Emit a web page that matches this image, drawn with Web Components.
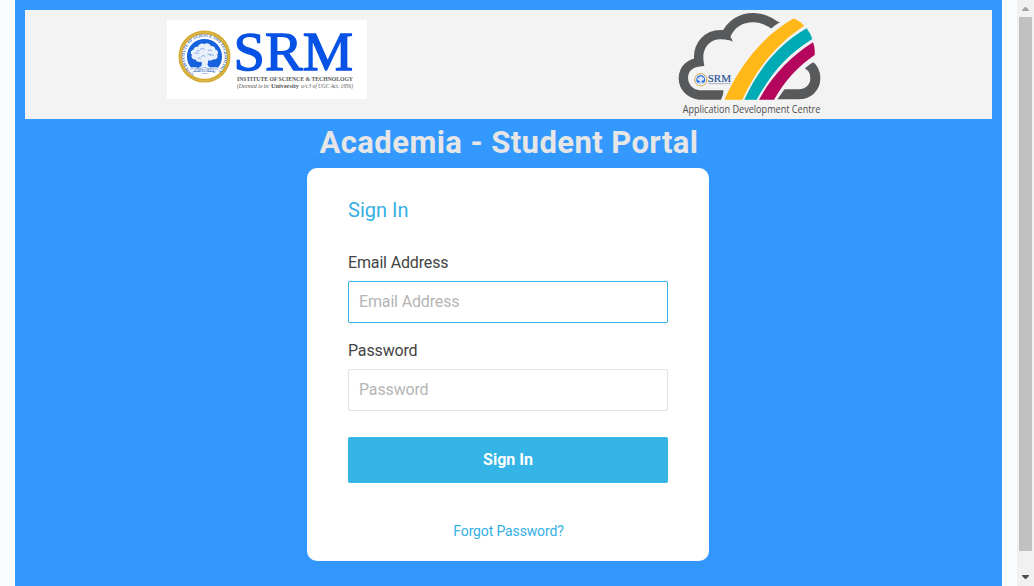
<!DOCTYPE html>
<html lang="en"><head><meta charset="utf-8"><title>Academia - Student Portal</title>
<style>html,body{margin:0;height:100%;overflow:hidden}body{font-family:Roboto,"Noto Sans",sans-serif;background:#fbfcfe}</style></head>
<body>
<portal-page>
  <portal-header slot="header"><srm-logo></srm-logo><adc-logo></adc-logo></portal-header>
  <span slot="title">Academia - Student Portal</span>
  <signin-card>
    <form-field label="Email Address" type="email" active></form-field>
    <form-field label="Password" type="password"></form-field>
  </signin-card>
</portal-page>
<script>
const define=(name,html)=>customElements.define(name,class extends HTMLElement{
  constructor(){super();const t=document.createElement('template');t.innerHTML=html;this.attachShadow({mode:'open'}).append(t.content.cloneNode(true));}
});
define('page-scrollbar',`<style>
:host{width:17px;flex:none;background:#f1f1f1;display:flex;flex-direction:column;align-items:center}
svg{display:block;flex:none}.thumb{width:13px;height:534px;background:#c1c1c1}
.space{flex:1}</style>
<svg width="17" height="17"><path d="M5 11V10L8 7h1l3 3v1z" fill="#a3a3a3"/></svg><div class="thumb"></div><div class="space"></div>
<svg width="17" height="17"><path d="M5 6h7v1L9 10H8L5 7z" fill="#505050"/></svg>`);
define('portal-page',`<style>
:host{display:flex;height:100%}
main{flex:1;margin:0 15px;padding:10px;box-sizing:border-box;background:#3399ff;display:flex;flex-direction:column;align-items:center}
slot[name=header]{display:block;width:100%}
h1{margin:0;height:49px;line-height:47px;color:#e6e6e6;font-size:31px;font-weight:700;font-family:Roboto,sans-serif;letter-spacing:.42px;white-space:nowrap;padding-left:1px}
</style><main><slot name="header"></slot><h1><slot name="title"></slot></h1><slot></slot></main><page-scrollbar></page-scrollbar>`);
define('portal-header',`<style>:host{display:grid;grid-template-columns:1fr 1fr;height:109px;background:#f3f3f3;justify-items:center;align-items:start}
::slotted(srm-logo){margin-top:10px}</style><slot></slot>`);
define('srm-seal',`<style>:host{display:block}svg{display:block;width:100%;height:100%;overflow:visible}</style>
<svg viewBox="0 0 160 160"><defs><path id="ring" d="M48 131A60 60 0 1 1 112 131"/></defs>
<circle cx="80" cy="80" r="73" fill="#fff" stroke="#d3ab32" stroke-width="11"/>
<circle cx="80" cy="80" r="73" fill="none" stroke="#e0bf5c" stroke-width="2"/>
<text font-family="Liberation Serif" font-weight="700" font-size="12" fill="#2864c8"><textPath href="#ring" startOffset="0" textLength="298">SRM INSTITUTE OF SCIENCE AND TECHNOLOGY</textPath></text>
<circle cx="80" cy="80" r="53" fill="#1762dc"/>
<path d="M45 74c-8-4-4-13 4-13 0-8 7-10 12-8 2-9 13-14 19-7 6-7 17-3 18 5 9-2 14 4 12 9 9 1 12 10 6 14 6 8-2 15-9 12-5 7-14 4-17 2l-3 17c1 6 7 9 13 11H63c8-3 12-7 11-15l-3-10c-7 6-15 3-17-4-9 1-15-7-9-13z" fill="#e9f0fa" stroke="#e9f0fa" stroke-width="4"/>
<path d="M50 71q8-6 13 1m4-13q7-7 13 0m10 3q8-5 13 2m-33 17q7-8 12-1m14-3q7-6 12 1m-48 8q5-4 9 0m-13-22q5-5 10 0m23 11q6-5 11 0" fill="none" stroke="#6e9be4" stroke-width="2.5"/>
<path d="M30 119q15-12 31-4 20-8 36 0 16-8 31 4-11 17-25 16-22-7-43 0-17 0-30-16z" fill="#fff"/>
<path d="M36 119q13-9 25-2 20-7 36 0 13-7 25 3m-78 7q12-4 23-2m24 0q12-2 21 4" fill="none" stroke="#5b89ca" stroke-width="2"/>
<text x="80" y="128" text-anchor="middle" font-family="Liberation Serif" font-size="11" fill="#4777be" textLength="66">LEARN LEAP LEAD</text>
</svg>`);
define('srm-logo',`<style>
:host{width:200px;height:79px;background:#fff;display:flex;align-items:flex-start}
srm-seal{width:53px;height:53px;margin:10px 0 0 11px;flex:none}svg{display:block;flex:none;margin-left:2px;overflow:visible}</style>
<srm-seal></srm-seal><svg width="134" height="79" viewBox="66 0 134 79" font-family="Liberation Serif">
<text x="66.5" y="50.3" font-size="55.5" fill="#0752e5" stroke="#0752e5" stroke-width="1.3" textLength="119.5" lengthAdjust="spacingAndGlyphs">SRM</text>
<text x="70" y="61" font-size="7" font-weight="700" fill="#555" textLength="116" lengthAdjust="spacingAndGlyphs">INSTITUTE OF SCIENCE &amp; TECHNOLOGY</text>
<text x="70" y="68" font-size="6" fill="#555" font-style="italic" textLength="32" lengthAdjust="spacingAndGlyphs">(Deemed to be</text>
<text x="104" y="68" font-size="6" fill="#555" font-weight="700" textLength="28" lengthAdjust="spacingAndGlyphs">University</text>
<text x="134" y="68" font-size="6" fill="#555" font-style="italic" textLength="52" lengthAdjust="spacingAndGlyphs">u/s 3 of UGC Act, 1956)</text></svg>`);
define('adc-logo',`<style>:host{display:block;width:160px;height:109px;position:relative}svg{display:block}srm-seal{position:absolute;left:23.5px;top:63px;width:13.5px;height:13.5px}</style>
<svg width="160" height="109" viewBox="0 6 480 327">
<path d="M160 261H88C57 257 40 235 40 211C40 184 59 166 87 162C80 114 111 72 168 81C183 48 213 29 250 29C285 29 308 45 326 62" fill="none" stroke="#58595b" stroke-width="28"/>
<path d="M157 65Q184 82 188 101L166 90zM306 44Q324 39 337 44L305 74z" fill="#58595b"/>
<path d="M413 169C432 181 436 194 436 211C436 240 413 259 386 259H300" fill="none" stroke="#58595b" stroke-width="30"/>
<path d="M361 25C278 65 195 162 150 283H317C343 239 386 188 440 156Q447 120 434 94 420 40 390 25z" fill="#f3f3f3"/>
<path d="M372 31C279 83 210 170 163 275H217C255 192 312 112 403 53Q390 40 372 31z" fill="#ffb817"/>
<path d="M410 61C326 109 266 182 223 275H260C302 198 352 139 427 93Q422 77 410 61z" fill="#00abb6"/>
<path d="M429 103C359 148 306 204 267 275H312C346 217 384 175 434 141Q436 120 429 103z" fill="#b5065d"/>
<text x="113" y="221" font-family="Liberation Serif" font-size="31" fill="#174991" stroke="#174991" stroke-width=".4" textLength="70" lengthAdjust="spacingAndGlyphs">SRM</text>
<path d="M115 227h67" stroke="#8090aa" stroke-width="2"/>
<text x="38" y="316" font-family="Open Sans" font-size="30" fill="#4e4e50" textLength="413" lengthAdjust="spacingAndGlyphs">Application Development Centre</text>
</svg><srm-seal></srm-seal>`);
define('signin-card',`<style>
:host{display:flex;flex-direction:column;box-sizing:border-box;width:402px;height:393px;margin-right:1px;padding:28px 41px 0;background:#fff;border-radius:10px;box-shadow:0 0 20px #0000000a;flex:none}
h2{font-size:20px;font-weight:400;line-height:28px;color:#35b0e4;margin:0 0 27px;letter-spacing:0}
button{height:46px;border:0;border-radius:2px;background:#34b5e6;color:#fff;font:700 16px Roboto,sans-serif;margin-top:10px;padding:0 0 1px}
a{font-size:14px;line-height:20px;color:#35b0e4;text-align:center;margin:38px 0 0 1px;letter-spacing:-.14px}
</style><h2>Sign In</h2><slot></slot><button>Sign In</button><a>Forgot Password?</a>`);
customElements.define('form-field',class extends HTMLElement{
 constructor(){super();this.attachShadow({mode:'open'}).innerHTML=`<style>
 :host{display:block;height:88px;flex:none}label{display:block;height:30px;line-height:24px;font-size:16px;color:#444;letter-spacing:-.15px}
 input{display:block;box-sizing:border-box;width:100%;height:42px;border:1px solid #e4e4e4;border-radius:2px;padding:0 10px 1px;font:400 16px Roboto,sans-serif;letter-spacing:-.15px;outline:0;background:#fff}
 :host([active]) input{border-color:#35b5e6;box-shadow:0 0 1px #35b5e655}
 input::placeholder{color:#b5b5b5;opacity:1}</style><label for="i"></label><input id="i">`;}
 connectedCallback(){const l=this.getAttribute('label'),i=this.shadowRoot.querySelector('input');
 this.shadowRoot.querySelector('label').textContent=l;i.placeholder=l;i.type=this.getAttribute('type');}
});
</script></body></html>
